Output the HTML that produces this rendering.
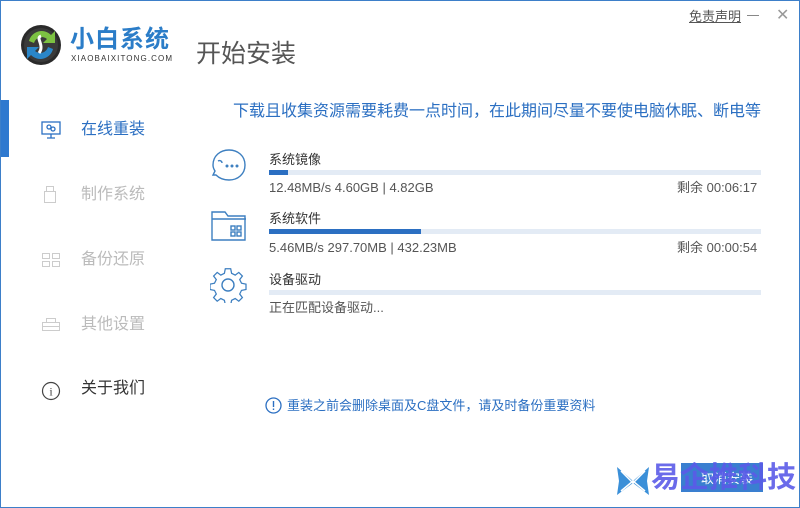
<!DOCTYPE html>
<html><head><meta charset="utf-8"><style>
*{margin:0;padding:0;box-sizing:border-box}
body{width:800px;height:508px;background:#fff;font-family:"Liberation Sans","Noto Sans CJK SC",sans-serif;position:relative;overflow:hidden;border:1px solid #3d7fc9;line-height:1}
.a{position:absolute;white-space:nowrap}
.nav{font-size:16px;color:#bbb}
.bar{position:absolute;left:268px;width:492px;height:5px;background:#e3ebf5}
.bar i{display:block;height:5px;background:#2b6fc2}
.t{font-size:13px;color:#333}
.s{font-size:13px;color:#555}
</style></head><body>
<svg class="a" style="left:18px;top:22px" width="44" height="44" viewBox="0 0 44 44"><circle cx="22" cy="22" r="20" fill="#2a2a2a"/><circle cx="22" cy="22" r="17" fill="#3a3a3a"/><path d="M10 18 A13 13 0 0 1 32 12 L36 8 L36 20 L24 20 L28 16 A8 8 0 0 0 15 20Z" fill="#7cc142"/><path d="M34 26 A13 13 0 0 1 12 32 L8 36 L8 24 L20 24 L16 28 A8 8 0 0 0 29 24Z" fill="#2a86c8"/><path d="M22 13 C16 15 26 22 20 30" stroke="#fff" stroke-width="3" fill="none"/></svg>
<div class="a" style="left:69px;top:27px;font-size:24px;font-weight:bold;color:#2b7dc8;letter-spacing:1px">小白系统</div>
<div class="a" style="left:70px;top:54px;font-size:8px;color:#333;letter-spacing:1.1px">XIAOBAIXITONG.COM</div>
<div class="a" style="left:195px;top:41px;font-size:25px;color:#555">开始安装</div>
<div class="a" style="left:688px;top:9px;font-size:13px;color:#555;text-decoration:underline">免责声明</div>
<div class="a" style="left:746px;top:14px;width:12px;height:1px;background:#888"></div>
<div class="a" style="left:775px;top:7px;font-size:16px;color:#999">✕</div>
<div class="a" style="left:0;top:99px;width:8px;height:57px;background:#2f79cf"></div>
<svg class="a" style="left:40px;top:120px" width="20" height="18" viewBox="0 0 20 18" fill="none" stroke="#2b6fc2" stroke-width="1.3"><rect x="1" y="1" width="18" height="12"/><circle cx="8" cy="6" r="2"/><circle cx="12" cy="8" r="2"/><path d="M10 13v4M6 17h8"/></svg>
<div class="a nav" style="left:80px;top:121px;color:#2b6fc2">在线重装</div>
<svg class="a" style="left:42px;top:184px" width="14" height="19" fill="none" stroke="#ccc" stroke-width="1"><rect x="3.5" y="1.5" width="7" height="5"/><rect x="1.5" y="6.5" width="11" height="11"/></svg>
<div class="a nav" style="left:80px;top:186px">制作系统</div>
<svg class="a" style="left:40px;top:251px" width="20" height="16" fill="none" stroke="#ccc" stroke-width="1"><rect x="1.5" y="1.5" width="7" height="5"/><rect x="1.5" y="9.5" width="7" height="5"/><rect x="11.5" y="1.5" width="7" height="5"/><rect x="11.5" y="9.5" width="7" height="5"/></svg>
<div class="a nav" style="left:80px;top:251px">备份还原</div>
<svg class="a" style="left:40px;top:315px" width="20" height="16" fill="none" stroke="#ccc" stroke-width="1"><path d="M5.5 6.5V2.5h9v4M1.5 6.5h17v8h-17zM1.5 10.5h17"/></svg>
<div class="a nav" style="left:80px;top:316px">其他设置</div>
<svg class="a" style="left:40px;top:380px" width="20" height="20"><circle cx="10" cy="10" r="8.5" fill="none" stroke="#444" stroke-width="1.2"/><text x="10" y="14.5" font-size="12" text-anchor="middle" fill="#444" font-family="Liberation Serif">i</text></svg>
<div class="a nav" style="left:80px;top:380px;color:#333">关于我们</div>
<div class="a" style="left:232px;top:103px;font-size:16px;color:#2b6fc2">下载且收集资源需要耗费一点时间，在此期间尽量不要使电脑休眠、断电等</div>
<svg class="a" style="left:209px;top:146px" width="38" height="36" viewBox="0 0 38 36" fill="none" stroke="#3d7fc0" stroke-width="1.4"><path d="M19 3C28 3 35 9 35 18 35 27 28 33 19 33 14 33 9 31 6 28L3 28 5 24C3 21 3 19 3 18 3 9 10 3 19 3Z"/><path d="M8 14c2-1 4 0 4 2"/><circle cx="17" cy="19" r=".8"/><circle cx="22" cy="19" r=".8"/><circle cx="27" cy="19" r=".8"/></svg>
<div class="a t" style="left:268px;top:152px">系统镜像</div>
<div class="bar" style="top:169px"><i style="width:19px"></i></div>
<div class="a s" style="left:268px;top:180px">12.48MB/s 4.60GB | 4.82GB</div>
<div class="a s" style="left:676px;top:180px">剩余 00:06:17</div>
<svg class="a" style="left:209px;top:208px" width="38" height="34" viewBox="0 0 38 34" fill="none" stroke="#3d7fc0" stroke-width="1.4"><path d="M2 3h13l3 4h17v24H2Z"/><path d="M2 10h34"/><rect x="21" y="17" width="4" height="4"/><rect x="27" y="17" width="4" height="4"/><rect x="21" y="23" width="4" height="4"/><rect x="27" y="23" width="4" height="4"/></svg>
<div class="a t" style="left:268px;top:211px">系统软件</div>
<div class="bar" style="top:228px"><i style="width:152px"></i></div>
<div class="a s" style="left:268px;top:240px">5.46MB/s 297.70MB | 432.23MB</div>
<div class="a s" style="left:676px;top:240px">剩余 00:00:54</div>
<svg class="a" style="left:209px;top:266px" width="38" height="36" viewBox="0 0 38 36" fill="none" stroke="#3d7fc0" stroke-width="1.4"><path d="M16 2h6l1 5 4 2 4-3 4 4-3 4 2 4 5 1v6l-5 1-2 4 3 4-4 4-4-3-4 2-1 5h-6l-1-5-4-2-4 3-4-4 3-4-2-4-5-1v-6l5-1 2-4-3-4 4-4 4 3 4-2Z" transform="scale(.9) translate(1,0)"/><circle cx="18" cy="18" r="6"/></svg>
<div class="a t" style="left:268px;top:272px">设备驱动</div>
<div class="bar" style="top:289px"></div>
<div class="a s" style="left:268px;top:300px">正在匹配设备驱动...</div>
<svg class="a" style="left:264px;top:396px" width="17" height="17"><circle cx="8.5" cy="8.5" r="7.5" fill="none" stroke="#2b6fc2" stroke-width="1.3"/><rect x="7.8" y="4" width="1.4" height="6" fill="#2b6fc2"/><rect x="7.8" y="11.5" width="1.4" height="1.5" fill="#2b6fc2"/></svg>
<div class="a" style="left:286px;top:398px;font-size:13px;color:#2b6fc2">重装之前会删除桌面及C盘文件，请及时备份重要资料</div>
<div class="a" style="left:680px;top:462px;width:82px;height:29px;background:#3a7fd0"></div>
<div class="a" style="left:700px;top:471px;font-size:13px;color:#fff">取消安装</div>
<svg class="a" style="left:612px;top:460px" width="40" height="40" viewBox="0 0 40 40"><path d="M4 6l16 14L36 6 34 20 36 34 20 22 4 34 6 20Z" fill="#3a8fd8"/><path d="M8 10l12 12 12-12M8 30l12-10 12 10" stroke="#fff" stroke-width="1.5" fill="none"/></svg>
<div class="a" style="left:650px;top:463px;font-size:29px;font-weight:bold;color:#5b5be8;opacity:.9">易企推科技</div>
</body></html>
